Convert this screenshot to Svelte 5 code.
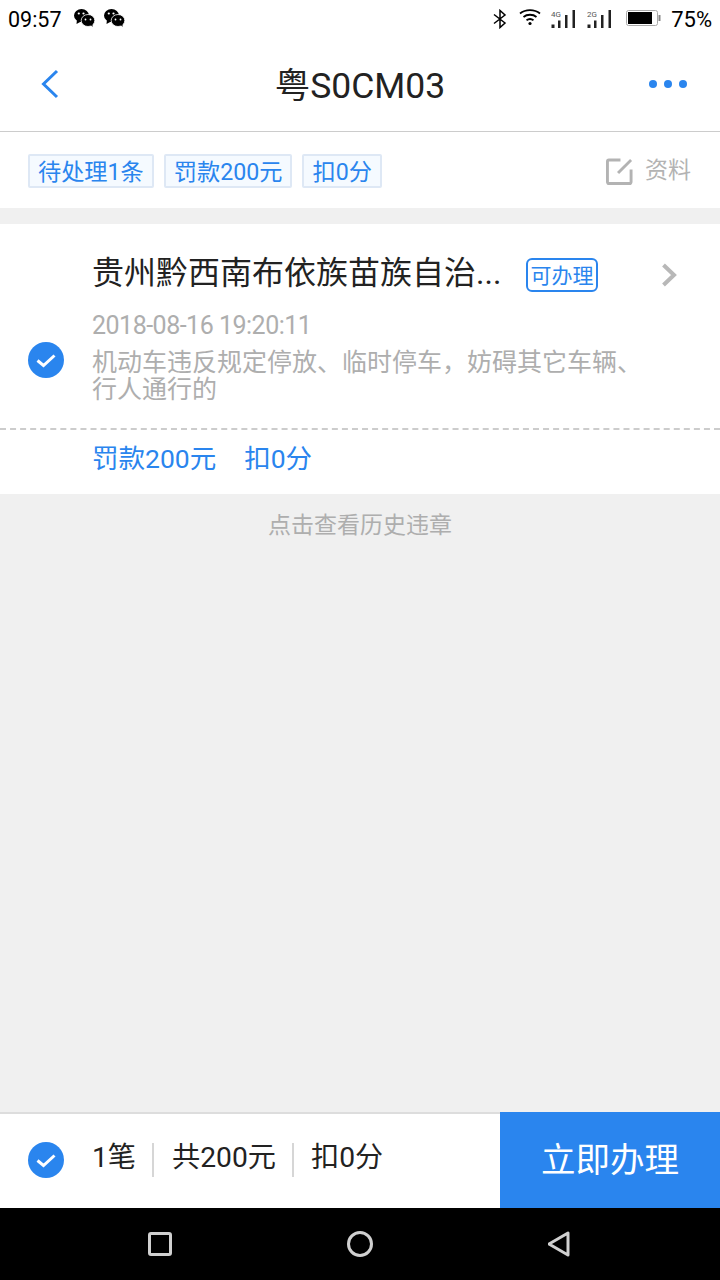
<script>
  const tags = ["待处理1条", "罚款200元", "扣0分"];
</script>

{#snippet wechat()}
  <svg class="wechat" width="21" height="18" viewBox="0 0 21 18">
    <ellipse cx="7.500" cy="6.500" rx="7.500" ry="6.500" fill="#000" />
    <path d="M3 10 L2.500 15 L8 12 Z" fill="#000" />
    <ellipse cx="14" cy="11.500" rx="6.800" ry="6" fill="#000" stroke="#fff" stroke-width="0.800" />
    <path d="M16 15 L18.500 18 L18.500 14 Z" fill="#000" />
    <circle cx="4.800" cy="4.500" r="1.100" fill="#fff" />
    <circle cx="9.500" cy="4.500" r="1.100" fill="#fff" />
    <circle cx="11.500" cy="10.500" r="0.900" fill="#fff" />
    <circle cx="16.500" cy="10.500" r="0.900" fill="#fff" />
  </svg>
{/snippet}

{#snippet signal(label)}
  <svg class="sig" width="24" height="20" viewBox="0 0 24 20">
    <text x="0" y="7.500" font-size="8" font-family="Roboto, sans-serif" fill="#555">{label}</text>
    <rect x="0.500" y="15.500" width="3" height="3.500" fill="#222" />
    <rect x="7" y="11.500" width="2.500" height="7.500" fill="#222" />
    <rect x="14" y="6" width="2.500" height="13" fill="#222" />
    <rect x="21.500" y="1" width="2.500" height="18" fill="#222" />
  </svg>
{/snippet}

{#snippet tick()}
  <svg width="36" height="36" viewBox="0 0 36 36">
    <circle cx="18" cy="18" r="18" fill="#2a85ee" />
    <path d="M9.500 18.500 L15.500 23.500 L26.500 13.500" fill="none" stroke="#fff" stroke-width="3" />
  </svg>
{/snippet}

<div class="page">
  <div class="status">
    <span class="time">09:57</span>
    {@render wechat()}
    {@render wechat()}
    <div class="status-right">
      <svg width="14" height="20" viewBox="0 0 14 20" fill="none" stroke="#000" stroke-width="1.500">
        <path d="M1 5.500 L12 14 L7 18.500 V1.500 L12 6 L1 14.500" />
      </svg>
      <svg class="wifi" width="22" height="18" viewBox="0 0 22 18" fill="none" stroke="#000" stroke-width="1.800">
        <path d="M1 5.500 C6.500 1 15.500 1 21 5.500" />
        <path d="M4.500 9 C8 6 14 6 17.500 9" />
        <path d="M7.500 12.300 C9.500 10.800 12.500 10.800 14.500 12.300" />
        <circle cx="11" cy="15.500" r="1.600" fill="#000" stroke="none" />
      </svg>
      {@render signal("4G")}
      {@render signal("2G")}
      <svg class="battery" width="35" height="16" viewBox="0 0 35 16">
        <rect x="0.500" y="0.500" width="31" height="15" rx="2" fill="#fff" stroke="#aaa" />
        <rect x="2" y="2" width="24" height="12" fill="#000" />
        <rect x="32.500" y="5" width="2" height="6" fill="#888" />
      </svg>
      <span class="pct">75%</span>
    </div>
  </div>

  <header class="nav">
    <svg class="back" width="20" height="30" viewBox="0 0 20 30" fill="none" stroke="#2a85ee" stroke-width="3">
      <path d="M17 2 L3.500 15 L17 28" />
    </svg>
    <h1>粤S0CM03</h1>
    <div class="dots"><i></i><i></i><i></i></div>
  </header>

  <div class="tags">
    {#each tags as t}
      <span class="tag">{t}</span>
    {/each}
    <div class="info">
      <svg width="27" height="27" viewBox="0 0 28 28" fill="none" stroke="#b3b3b3" stroke-width="3">
        <path d="M15 2 H3 A1.500 1.500 0 0 0 1.500 3.500 V25 A1.500 1.500 0 0 0 3 26.500 H24.500 A1.500 1.500 0 0 0 26 25 V12" />
        <path d="M26 2 L12.500 15.500" />
      </svg>
      <span>资料</span>
    </div>
  </div>

  <section class="card">
    <div class="card-main">
      <div class="check-col">{@render tick()}</div>
      <div class="detail">
        <div class="title-row">
          <span class="title">贵州黔西南布依族苗族自治...</span>
          <span class="can">可办理</span>
          <svg class="arrow" width="16" height="24" viewBox="0 0 16 24" fill="none" stroke="#b8b8b8" stroke-width="4">
            <path d="M2.500 2 L13 12 L2.500 22" />
          </svg>
        </div>
        <p class="date">2018-08-16 19:20:11</p>
        <p class="desc">机动车违反规定停放、临时停车，妨碍其它车辆、行人通行的</p>
      </div>
    </div>
    <div class="fees">
      <span>罚款200元</span>
      <span>扣0分</span>
    </div>
  </section>

  <div class="history">点击查看历史违章</div>

  <footer class="bottom">
    <div class="sum">
      {@render tick()}
      <span class="n first">1笔</span>
      <span class="n">共200元</span>
      <span class="n last">扣0分</span>
    </div>
    <button class="go">立即办理</button>
  </footer>

  <div class="softkeys">
    <svg width="24" height="24" viewBox="0 0 24 24" fill="none" stroke="#d0d0d0" stroke-width="3">
      <rect x="1.500" y="1.500" width="21" height="21" rx="1.500" />
    </svg>
    <svg width="26" height="26" viewBox="0 0 26 26" fill="none" stroke="#d0d0d0" stroke-width="3">
      <circle cx="13" cy="13" r="11.500" />
    </svg>
    <svg width="24" height="26" viewBox="0 0 24 26" fill="none" stroke="#d0d0d0" stroke-width="3" stroke-linejoin="round">
      <path d="M20 2 V24 L1 13 Z" />
    </svg>
  </div>
</div>

<style>
  :global(body) {
    margin: 0;
    background: #f0f0f0;
  }
  .page {
    width: 720px;
    height: 1280px;
    display: flex;
    flex-direction: column;
    font-family: Roboto, "Noto Sans CJK SC", sans-serif;
    overflow: hidden;
    background: #f0f0f0;
  }
  .status {
    height: 38px;
    flex-shrink: 0;
    display: flex;
    align-items: center;
    padding: 0 8px;
    background: #fff;
    color: #000;
  }
  .time {
    font-size: 21.500px;
    margin-right: 12px;
  }
  .wechat {
    margin-right: 9px;
    margin-top: -3px;
  }
  .status-right {
    margin-left: auto;
    display: flex;
    align-items: center;
  }
  .wifi {
    margin-left: 12px;
    margin-top: -4px;
  }
  .sig {
    margin-left: 10px;
    margin-top: -1px;
  }
  .sig + .sig {
    margin-left: 12px;
  }
  .battery {
    margin-left: 15px;
    margin-top: -2px;
  }
  .pct {
    font-size: 22px;
    margin-left: 10px;
  }
  .nav {
    height: 93px;
    flex-shrink: 0;
    background: #fff;
    border-bottom: 1px solid #ccc;
    display: flex;
    align-items: center;
    justify-content: center;
    position: relative;
  }
  .nav h1 {
    margin: 0 0 5px;
    font-size: 35.500px;
    font-weight: 400;
    color: #222;
  }
  .back {
    position: absolute;
    left: 40px;
    top: 31px;
  }
  .dots {
    position: absolute;
    right: 33px;
    top: 42px;
    display: flex;
    gap: 7px;
  }
  .dots i {
    width: 8px;
    height: 8px;
    border-radius: 50%;
    background: #2a85ee;
  }
  .tags {
    height: 76px;
    flex-shrink: 0;
    background: #fff;
    display: flex;
    align-items: center;
    padding: 2px 29px 0 28px;
    gap: 10px;
    box-sizing: border-box;
  }
  .tag {
    height: 34px;
    box-sizing: border-box;
    display: flex;
    align-items: center;
    padding: 0 8px 2px;
    border: 2px solid #dee8f5;
    border-radius: 2px;
    background: #f5faff;
    color: #2a85ee;
    font-size: 23.200px;
  }
  .info {
    margin-left: auto;
    display: flex;
    align-items: center;
    gap: 12px;
    color: #b3b3b3;
    font-size: 23px;
  }
  .info span {
    padding-bottom: 6px;
  }
  .card {
    margin-top: 16px;
    height: 270px;
    flex-shrink: 0;
    background: #fff;
    display: flex;
    flex-direction: column;
  }
  .card-main {
    height: 204px;
    flex-shrink: 0;
    display: flex;
    border-bottom: 2px dashed #ccc;
  }
  .check-col {
    width: 92px;
    flex-shrink: 0;
    padding: 118px 0 0 28px;
    box-sizing: border-box;
  }
  .detail {
    flex: 1;
    padding-right: 43px;
  }
  .title-row {
    height: 48px;
    margin-top: 27px;
    display: flex;
    align-items: center;
    color: #222;
  }
  .title {
    font-size: 32px;
    width: 434px;
    white-space: nowrap;
    padding-bottom: 10px;
  }
  .can {
    border: 2px solid #2a85ee;
    border-radius: 6px;
    color: #2a85ee;
    font-size: 21px;
    height: 34px;
    box-sizing: border-box;
    display: flex;
    align-items: center;
    padding: 0 2.500px 2px;
  }
  .arrow {
    margin-left: auto;
  }
  .date {
    margin: 12px 0 0;
    font-size: 25px;
    letter-spacing: -0.500px;
    line-height: 30px;
    color: #aeaeae;
  }
  .desc {
    margin: 8px 0 0;
    width: 550px;
    font-size: 25px;
    line-height: 27px;
    color: #aeaeae;
  }
  .fees {
    flex: 1;
    display: flex;
    align-items: center;
    padding: 0 0 12px 92px;
    gap: 28px;
    color: #2a85ee;
    font-size: 26.500px;
  }
  .history {
    flex: 1;
    padding-top: 16px;
    text-align: center;
    font-size: 23px;
    line-height: 32px;
    color: #aeaeae;
  }
  .bottom {
    height: 96px;
    flex-shrink: 0;
    display: flex;
    background: #fff;
  }
  .sum {
    flex: 1;
    display: flex;
    align-items: center;
    padding: 0 0 2px 28px;
    border-top: 2px solid #ddd;
    box-sizing: border-box;
    color: #222;
    font-size: 28.200px;
  }
  .sum svg {
    margin-right: 28px;
  }
  .n {
    height: 34px;
    padding: 0 16px 0 18px;
    line-height: 30px;
    border-left: 2px solid #d6d6d6;
  }
  .n.first {
    padding: 0 16px 0 0;
    border-left: none;
  }
  .n.last {
    padding-left: 17px;
  }
  .go {
    width: 220px;
    border: none;
    background: #2a85ee;
    color: #fff;
    font-family: inherit;
    font-size: 34.500px;
    padding: 0 0 7px;
  }
  .softkeys {
    height: 72px;
    flex-shrink: 0;
    background: #000;
    display: flex;
    align-items: center;
    justify-content: space-between;
    padding: 0 148px;
  }
</style>
